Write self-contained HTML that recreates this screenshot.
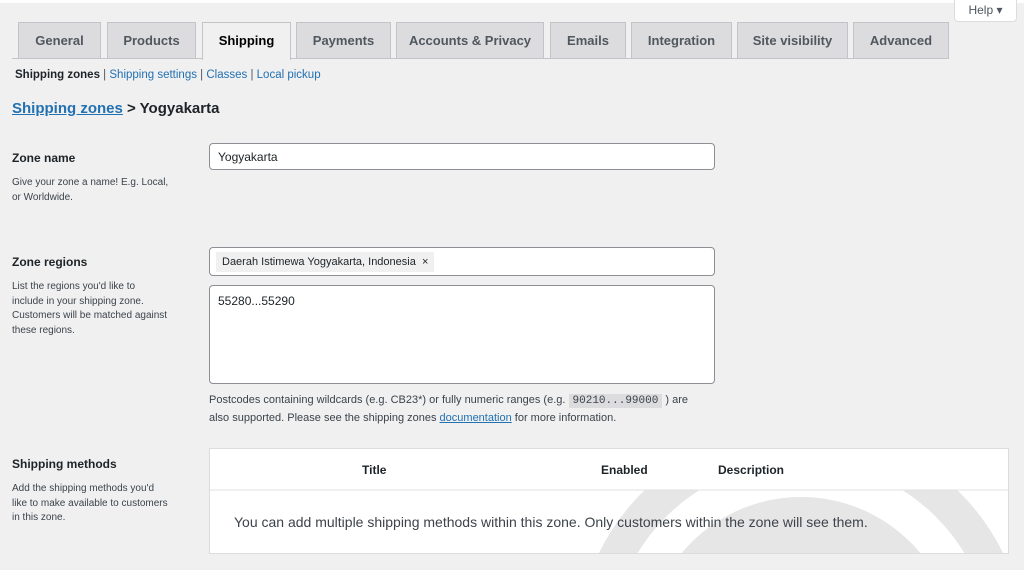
<!DOCTYPE html>
<html><head><meta charset="utf-8"><style>
body{margin:0;width:1024px;height:570px;background:#f0f0f1;font-family:"Liberation Sans",sans-serif;color:#1d2327;position:relative;overflow:hidden}
.top{position:absolute;left:0;top:0;width:1024px;height:3px;background:#fff}
.tab{position:absolute;top:22px;height:36px;background:#dcdcde;border:1px solid #c3c4c7;border-bottom:none;color:#50575e;font-weight:bold;font-size:13px;line-height:36px;text-align:center;box-sizing:border-box}
.tab.act{background:#f0f0f1;color:#000;height:38px}
.line{position:absolute;left:12px;top:58px;width:937px;height:1px;background:#c3c4c7}
.help{position:absolute;left:954px;top:-2px;width:63px;height:24px;background:#fff;border:1px solid #dcdcde;border-radius:0 0 4px 4px;font-size:12px;color:#50575e;line-height:22px;text-align:center;box-sizing:border-box}
a{color:#2271b1}
.sub{position:absolute;left:15px;top:69px;font-size:11.5px;color:#50575e}
.sub b{color:#1d2327}
.sub a{text-decoration:none}
h2{position:absolute;left:12px;top:100px;margin:0;font-size:15px}
.lab{position:absolute;left:12px;font-weight:bold;font-size:12px}
.desc{position:absolute;left:12px;font-size:10px;line-height:14.5px;color:#3c434a;width:175px}
.inp{position:absolute;left:209px;width:506px;background:#fff;border:1px solid #8c8f94;border-radius:4px;box-sizing:border-box;font-size:12px}
.tag{position:absolute;left:6px;top:4px;height:20px;background:#f0f0f1;font-size:11px;line-height:20px;padding:0 6px;color:#1d2327}
.note{position:absolute;left:209px;top:392px;font-size:11px;line-height:16.5px;color:#3c434a}
code{font-family:"Liberation Mono",monospace;background:#dcdcde;padding:1px 4px;font-size:11px}
.tbl{position:absolute;left:209px;top:448px;width:800px;height:106px;background:#fff;border:1px solid #dcdcde;box-sizing:border-box;overflow:hidden}
.th{position:absolute;top:14px;font-weight:bold;font-size:12px}
</style></head><body>
<div class="top"></div>
<div class="line"></div>
<div class="tab" style="left:18px;width:83px">General</div>
<div class="tab" style="left:107px;width:89px">Products</div>
<div class="tab act" style="left:202px;width:89px">Shipping</div>
<div class="tab" style="left:296px;width:95px">Payments</div>
<div class="tab" style="left:396px;width:148px">Accounts &amp; Privacy</div>
<div class="tab" style="left:550px;width:76px">Emails</div>
<div class="tab" style="left:631px;width:101px">Integration</div>
<div class="tab" style="left:737px;width:111px">Site visibility</div>
<div class="tab" style="left:853px;width:96px">Advanced</div>
<div class="help">Help ▾</div>
<div class="sub"><b>Shipping zones</b> | <a>Shipping settings</a> | <a>Classes</a> | <a>Local pickup</a></div>
<h2><a style="text-decoration:underline">Shipping zones</a> &gt; Yogyakarta</h2>
<div class="lab" style="top:151px">Zone name</div>
<div class="desc" style="top:176px">Give your zone a name! E.g. Local,<br>or Worldwide.</div>
<div class="inp" style="top:143px;height:27px;padding:6px 8px">Yogyakarta</div>
<div class="lab" style="top:255px">Zone regions</div>
<div class="desc" style="top:280px">List the regions you'd like to<br>include in your shipping zone.<br>Customers will be matched against<br>these regions.</div>
<div class="inp" style="top:247px;height:29px"><div class="tag">Daerah Istimewa Yogyakarta, Indonesia &nbsp;×</div></div>
<div class="inp" style="top:285px;height:99px;padding:8px 8px">55280...55290</div>
<div class="note">Postcodes containing wildcards (e.g. CB23*) or fully numeric ranges (e.g. <code>90210...99000</code> ) are<br>also supported. Please see the shipping zones <a style="text-decoration:underline">documentation</a> for more information.</div>
<div class="lab" style="top:457px">Shipping methods</div>
<div class="desc" style="top:482px">Add the shipping methods you'd<br>like to make available to customers<br>in this zone.</div>
<div class="tbl">
<svg style="position:absolute;left:0;top:0" width="800" height="106"><g fill="none" stroke="#e6e6e6"><circle cx="591" cy="203" r="208" stroke-width="34"/><circle cx="591" cy="203" r="125" stroke-width="60"/></g><rect x="0" y="0" width="800" height="41" fill="#fff"/><line x1="0" y1="41" x2="800" y2="41" stroke="#e0e0e0"/></svg>
<div class="th" style="left:152px">Title</div>
<div class="th" style="left:391px">Enabled</div>
<div class="th" style="left:508px">Description</div>
<div style="position:absolute;left:24px;top:65px;font-size:14px;color:#3c434a">You can add multiple shipping methods within this zone. Only customers within the zone will see them.</div>
</div>
</body></html>
